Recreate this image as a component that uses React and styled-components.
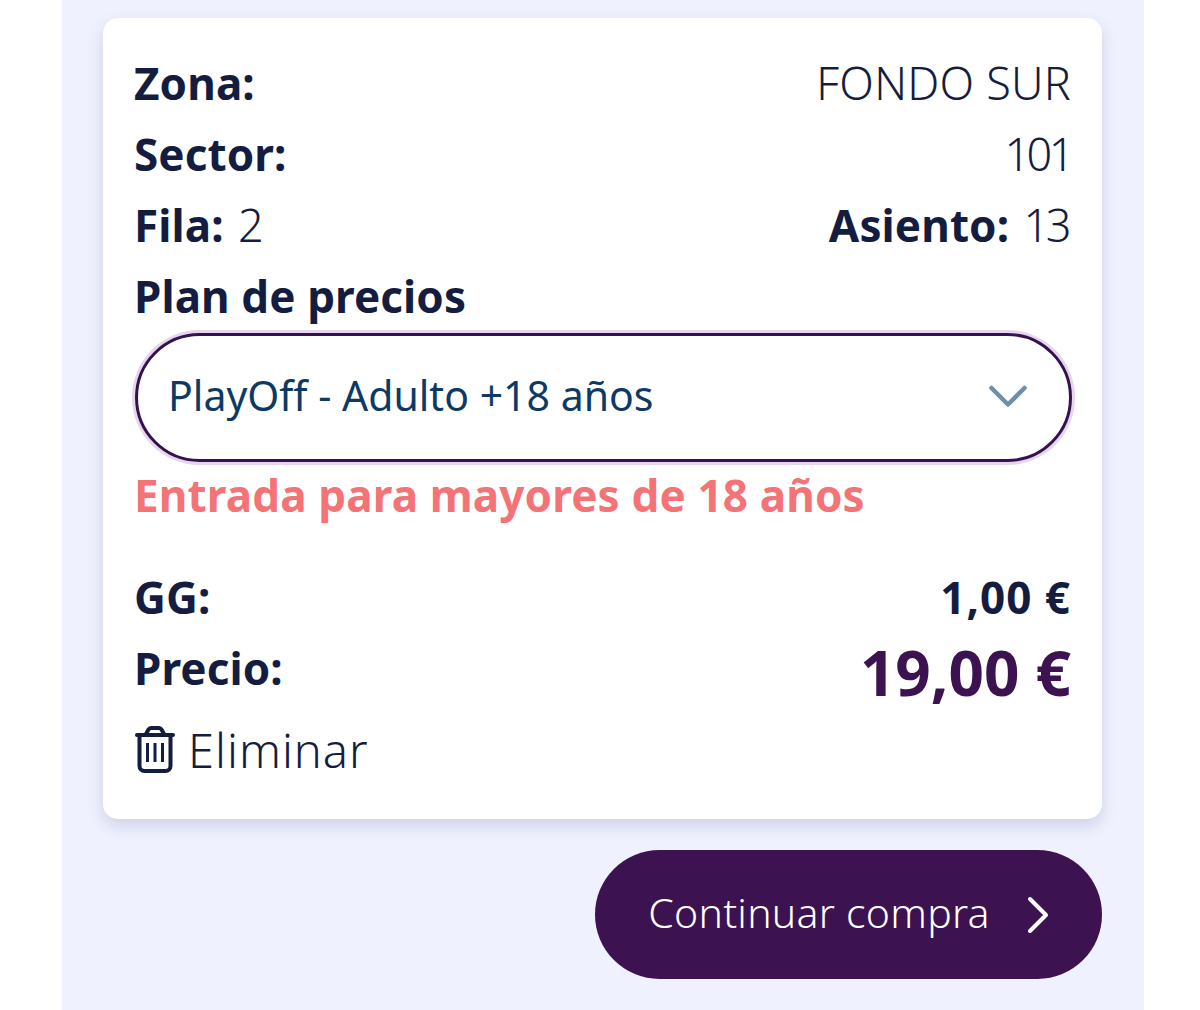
import React from "react";
import styled, { createGlobalStyle } from "styled-components";

const Global = createGlobalStyle`
  html, body { margin: 0; padding: 0; background: #fff; }
  body { font-family: "Noto Sans", "Open Sans", sans-serif; color: #141d40; }
`;

const Page = styled.div`
  width: 1082px;
  height: 1010px;
  margin-left: 62px;
  background: #eff1fe;
  padding: 18px 42px 0 41px;
  box-sizing: border-box;
  overflow: hidden;
`;

const Card = styled.section`
  height: 801px;
  box-sizing: border-box;
  background: #fff;
  border-radius: 15px;
  box-shadow: 0 7px 16px rgba(40, 50, 100, 0.16);
  padding: 31px 31px 0 32px;
  display: flex;
  flex-direction: column;
`;

const Row = styled.div`
  height: 71px;
  box-sizing: border-box;
  padding-bottom: 4px;
  margin-left: -1px;
  display: flex;
  justify-content: space-between;
  align-items: center;
  font-size: 44px;
  flex: none;
`;

const Pair = styled.span`
  word-spacing: 3px;
  padding-right: ${(p) => (p.$end ? "3px" : "0")};
`;

const Label = styled.span`
  font-weight: 700;
  letter-spacing: 0.1px;
`;

const Value = styled.span`
  font-size: 45px;
  font-weight: 300;
  letter-spacing: ${(p) => (p.$digits ? "-3.5px" : "0.25px")};
`;

const Total = styled.span`
  font-size: 62px;
  font-weight: 700;
  color: #3c1250;
  position: relative;
  top: 4px;
`;

const Amount = styled.span`
  font-weight: 700;
  letter-spacing: 1px;
`;

const SelectBox = styled.div`
  flex: none;
  height: 129px;
  box-sizing: border-box;
  margin-right: -1px;
  border: 3px solid #35124d;
  border-radius: 65px;
  box-shadow: 0 0 0 3px #e5d5ee;
  padding: 0 42px 0 30px;
  display: flex;
  align-items: center;
  justify-content: space-between;
  font-size: 41px;
  color: #0c3a64;
`;

const SelectText = styled.span`
  font-weight: 400;
  padding-bottom: 5px;
`;

const ErrorText = styled.div`
  flex: none;
  height: 70px;
  box-sizing: border-box;
  padding-bottom: 4px;
  margin-left: -1px;
  display: flex;
  align-items: center;
  font-size: 44px;
  font-weight: 700;
  color: #f47376;
  letter-spacing: 0.15px;
  margin-bottom: 31px;
`;

const Remove = styled.div`
  flex: none;
  display: flex;
  align-items: center;
  gap: 13px;
  margin-top: 11px;
  height: 71px;
  box-sizing: border-box;
  padding-bottom: 4px;
  font-size: 47px;
  font-weight: 300;
  letter-spacing: 1px;
`;

const Footer = styled.div`
  display: flex;
  justify-content: flex-end;
  margin-top: 31px;
`;

const Button = styled.button`
  width: 507px;
  height: 129px;
  border: none;
  border-radius: 65px;
  background: #3c1250;
  color: #fff;
  font-family: inherit;
  font-size: 41px;
  font-weight: 300;
  letter-spacing: 0.25px;
  display: flex;
  align-items: center;
  justify-content: center;
  gap: 37px;
  padding: 0;
`;

const ButtonLabel = styled.span`
  padding-bottom: 5px;
`;

export default function App() {
  return (
    <>
      <Global />
      <Page>
        <Card>
          <Row><Label>Zona:</Label><Value>FONDO SUR</Value></Row>
          <Row><Label>Sector:</Label><Value $digits>101</Value></Row>
          <Row>
            <Pair><Label>Fila:</Label> <Value>2</Value></Pair>
            <Pair $end><Label>Asiento:</Label> <Value $digits>13</Value></Pair>
          </Row>
          <Row><Label>Plan de precios</Label></Row>
          <SelectBox>
            <SelectText>PlayOff - Adulto +18 años</SelectText>
            <svg width="38" height="25" viewBox="0 0 38 25" fill="none">
              <path d="M2.5 3 L19 19.5 L35.5 3" stroke="#6f8fa8" strokeWidth="4.5" strokeLinecap="round" strokeLinejoin="round" />
            </svg>
          </SelectBox>
          <ErrorText>Entrada para mayores de 18 años</ErrorText>
          <Row><Label>GG:</Label><Amount>1,00 €</Amount></Row>
          <Row><Label>Precio:</Label><Total>19,00 €</Total></Row>
          <Remove>
            <svg width="40" height="47" viewBox="0 0 40 47" fill="none" stroke="#141d40" strokeWidth="4" strokeLinecap="round" strokeLinejoin="round">
              <path d="M2 9 H38" />
              <path d="M4.5 9 V40 a5 5 0 0 0 5 5 H30.5 a5 5 0 0 0 5 -5 V9" />
              <path d="M11 8 L13.5 3.5 a3 3 0 0 1 2.5 -1.5 H24 a3 3 0 0 1 2.5 1.5 L29 8" />
              <path d="M12.5 17 V36 M20 17 V36 M27.5 17 V36" strokeWidth="3" strokeLinecap="butt" />
            </svg>
            <span>Eliminar</span>
          </Remove>
        </Card>
        <Footer>
          <Button>
            <ButtonLabel>Continuar compra</ButtonLabel>
            <svg width="22" height="38" viewBox="0 0 22 38" fill="none">
              <path d="M3 3 L19 19 L3 35" stroke="#fff" strokeWidth="4" strokeLinecap="round" strokeLinejoin="round" />
            </svg>
          </Button>
        </Footer>
      </Page>
    </>
  );
}
